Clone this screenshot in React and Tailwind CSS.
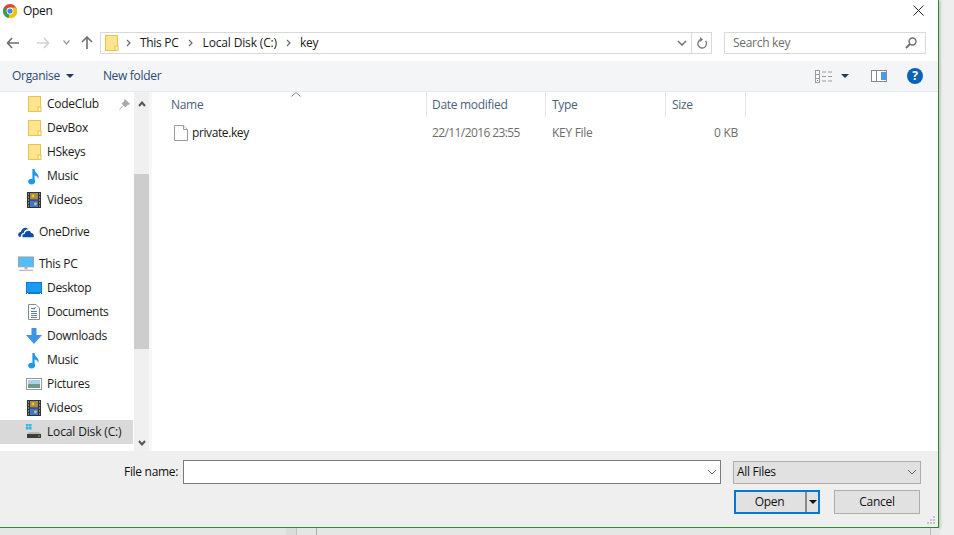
const font = { fontFamily: '"Open Sans","Noto Sans",sans-serif' };

function Folder() {
  return (
    <svg className="block" width="14" height="16" viewBox="0 0 14 16">
      <rect x="0.5" y="0.5" width="12" height="15" fill="#fde58f" stroke="#e8c350" />
      <rect x="10" y="11" width="3" height="4.5" fill="#fff3c4" stroke="#e8c350" />
    </svg>
  );
}
function Note() {
  return (
    <svg className="block" width="13" height="17" viewBox="0 0 13 17">
      <path d="M5.5 1 V13" stroke="#1c97ea" strokeWidth="2.2" fill="none" />
      <ellipse cx="3.6" cy="13.6" rx="3.4" ry="2.8" fill="#1c97ea" />
      <path d="M5.5 0.5 C6.5 4.5 11.5 5.5 10.5 11 C10 8.5 7.5 7.5 5.5 7 Z" fill="#1c97ea" />
    </svg>
  );
}
function Film() {
  return (
    <svg className="block" width="14" height="16" viewBox="0 0 14 16">
      <rect width="14" height="16" fill="#333" />
      <rect x="3" y="1" width="8" height="6.5" fill="#a58b4c" />
      <rect x="3" y="8.5" width="8" height="6.5" fill="#3f74d8" />
      <circle cx="6" cy="4" r="1.4" fill="#e6c93a" />
      <circle cx="8.5" cy="12" r="1.4" fill="#e6c93a" />
      <path d="M1 2h1M1 5h1M1 8h1M1 11h1M1 14h1M12 2h1M12 5h1M12 8h1M12 11h1M12 14h1" stroke="#ddd" />
    </svg>
  );
}
function Cloud() {
  return (
    <svg className="block" width="17" height="12" viewBox="0 0 17 12">
      <path d="M1 11 C-1 8 1 6 3 6 C4 2 8 0 11 3 C8 3 6 5 6 7 C4 7 3 9 3 11 Z" fill="#0f4fa8" />
      <path d="M5 11.5 C4 9 5.5 8 7 8 C8 4 13 3.5 14 7 C16 7 17.5 9 16.5 11.5 Z" fill="#0f4fa8" />
    </svg>
  );
}
function Pc() {
  return (
    <svg className="block" width="17" height="16" viewBox="0 0 17 16">
      <rect x="0.5" y="0.5" width="16" height="10.5" fill="#53bdf5" stroke="#9aa3ab" />
      <rect x="7" y="11" width="3" height="2.5" fill="#a9b0b6" />
      <rect x="1" y="14" width="15" height="1.5" fill="#b8bec4" />
    </svg>
  );
}
function Desktop() {
  return (
    <svg className="block" width="16" height="12" viewBox="0 0 16 12">
      <rect width="16" height="12" fill="#0c7bd8" />
      <rect x="1" y="1" width="14" height="9" fill="#1b9bf0" />
      <path d="M1 11.5h1M14 11.5h1" stroke="#fff" />
    </svg>
  );
}
function Doc() {
  return (
    <svg className="block" width="12" height="16" viewBox="0 0 12 16">
      <path d="M0.5 0.5 H8 L11.5 4 V15.5 H0.5 Z" fill="#fff" stroke="#8b8b8b" />
      <path d="M3 4.5h3M3 7.5h6M3 9.5h6M3 11.5h6M3 13.5h6" stroke="#5b7fa0" />
      <path d="M6 5.5l1.5-2.5" stroke="#2b8ad8" />
    </svg>
  );
}
function Down() {
  return (
    <svg className="block" width="16" height="16" viewBox="0 0 16 16">
      <path d="M5.5 0 H10.5 V7 H16 L8 16 L0 7 H5.5 Z" fill="#3f94e6" />
    </svg>
  );
}
function Pic() {
  return (
    <svg className="block" width="16" height="12" viewBox="0 0 16 12">
      <rect x="0.5" y="0.5" width="15" height="11" fill="#fff" stroke="#9a9a9a" />
      <rect x="2" y="2" width="12" height="4" fill="#a9d2ea" />
      <rect x="2" y="6" width="12" height="4" fill="#6e9a8a" />
    </svg>
  );
}
function Disk() {
  return (
    <svg className="block" width="16" height="16" viewBox="0 0 16 16">
      <rect x="0" y="0" width="2.5" height="2.5" fill="#2fb3ec" />
      <rect x="3" y="0" width="2.5" height="2.5" fill="#2fb3ec" />
      <rect x="0" y="3" width="2.5" height="2.5" fill="#2fb3ec" />
      <rect x="3" y="3" width="2.5" height="2.5" fill="#2fb3ec" />
      <path d="M3 8 H13 L15 10 H1 Z" fill="#b9b9b9" />
      <rect x="1" y="10" width="14" height="4" fill="#3c3c3c" />
      <rect x="12" y="11.5" width="2" height="1" fill="#4fd04f" />
    </svg>
  );
}
function Chrome() {
  return (
    <svg className="block" width="14" height="14" viewBox="0 0 14 14">
      <circle cx="7" cy="7" r="7" fill="#db4437" />
      <path d="M7 7 L1 3.6 A7 7 0 0 0 5.6 13.9 Z" fill="#2da44e" />
      <path d="M7 3.6 H13.4 A7 7 0 0 1 5.6 13.9 L7 7 Z" fill="#f4c20d" />
      <circle cx="7" cy="7" r="3.4" fill="#fff" />
      <circle cx="7" cy="7" r="2.6" fill="#4285f4" />
    </svg>
  );
}
function Chevron({ color = "#6d6d6d", width = 1.3 }) {
  return (
    <svg className="block" width="10" height="6" viewBox="0 0 10 6">
      <path d="M1 1 L5 5 L9 1" fill="none" stroke={color} strokeWidth={width} />
    </svg>
  );
}
function Sep() {
  return (
    <svg className="block" width="5" height="8" viewBox="0 0 5 8">
      <path d="M1 1 L4 4 L1 7" fill="none" stroke="#6a6a6a" strokeWidth="1.2" />
    </svg>
  );
}
function Caret({ color = "#1f3a5f" }) {
  return (
    <svg className="block" width="8" height="4" viewBox="0 0 8 4">
      <path d="M0 0 H8 L4 4 Z" fill={color} />
    </svg>
  );
}

function NavRow({ icon, label, indent = true, selected, pin, mb, inset }) {
  return (
    <div className={`flex items-center h-6 ${indent ? "pl-[26px]" : "pl-[18px]"} ${selected ? "bg-[#d9d9d9] tracking-[-0.15px]" : ""} ${mb ? "mb-2" : ""}`}>
      <div className="w-[21px] shrink-0 flex items-center">
        <div className={`${inset ? "pl-[2px]" : "w-4 flex justify-center"}`}>{icon}</div>
      </div>
      <span className="text-[12px] text-[#1a1a1a] whitespace-nowrap">{label}</span>
      {pin && (
        <svg className="ml-auto mr-[3px]" width="11" height="11" viewBox="0 0 11 11">
          <path d="M6 0.5 L10.5 5 L8.5 5.5 L6.5 8 L3 4.5 L5.5 2.5 Z M4 6.5 L0.5 10.5" fill="#a8a8a8" stroke="#a8a8a8" />
        </svg>
      )}
    </div>
  );
}

function ColHead({ w, label, pad = "pl-[6px]" }) {
  return (
    <div className={`${w} h-[25px] shrink-0 border-r border-[#e5e5e5] ${pad} flex items-center text-[12px] text-[#4c607a]`}>
      {label}
    </div>
  );
}

export default function App() {
  return (
    <div className="w-[954px] h-[535px] bg-[#eeeeee] overflow-hidden tracking-[-0.3px]" style={font}>
      <div className="w-[939px] h-[528px] bg-white border-r border-b border-[#2f8a2f] flex flex-col shadow-[1px_1px_3px_rgba(0,0,0,0.25)]">
        {/* title */}
        <div className="h-[21px] shrink-0 flex items-center pl-[3px] pr-[14px]">
          <Chrome />
          <span className="ml-[6px] text-[12px] text-[#111]">Open</span>
          <svg className="ml-auto" width="11" height="11" viewBox="0 0 11 11">
            <path d="M0.5 0.5 L10.5 10.5 M10.5 0.5 L0.5 10.5" stroke="#222" strokeWidth="1" />
          </svg>
        </div>
        {/* nav */}
        <div className="h-[40px] shrink-0 flex items-center pt-[3px]">
          <svg className="ml-[6px]" width="13" height="12" viewBox="0 0 13 12">
            <path d="M6 1 L1.5 6 L6 11 M1.5 6 H13" fill="none" stroke="#6f6f6f" strokeWidth="1.6" />
          </svg>
          <svg className="ml-[18px]" width="13" height="12" viewBox="0 0 13 12">
            <path d="M7 1 L11.5 6 L7 11 M11.5 6 H0" fill="none" stroke="#cfcfcf" strokeWidth="1.6" />
          </svg>
          <div className="ml-[13px]"><svg className="block" width="7" height="5" viewBox="0 0 7 5"><path d="M0.5 0.5 L3.5 4 L6.5 0.5" fill="none" stroke="#9a9a9a" strokeWidth="1.3" /></svg></div>
          <svg className="ml-[11px]" width="12" height="13" viewBox="0 0 12 13">
            <path d="M1 6 L6 1 L11 6 M6 1 V13" fill="none" stroke="#6f6f6f" strokeWidth="1.6" />
          </svg>
          <div className="ml-[7px] w-[612px] h-[22px] border border-[#d9d9d9] flex items-center pl-[4px]">
            <Folder />
            <span className="ml-[7px]"><Sep /></span>
            <span className="ml-[9px] text-[12px] text-[#1a1a1a]">This PC</span>
            <span className="ml-[9px]"><Sep /></span>
            <span className="ml-[10px] text-[12px] text-[#1a1a1a] tracking-[-0.15px]">Local Disk (C:)</span>
            <span className="ml-[9px]"><Sep /></span>
            <span className="ml-[9px] text-[12px] text-[#1a1a1a]">key</span>
            <div className="ml-auto flex items-center h-full">
              <span className="mr-[4px] flex"><Chevron color="#777" width={1.6} /></span>
              <div className="w-[20px] h-full border-l border-[#d9d9d9] flex items-center justify-center">
                <svg width="11" height="12" viewBox="0 0 11 12">
                  <path d="M9.5 4 A4.3 4.3 0 1 1 5.5 2.5" fill="none" stroke="#7b7b7b" strokeWidth="1.4" />
                  <path d="M4 0 L7 2.5 L4 5 Z" fill="#7b7b7b" />
                </svg>
              </div>
            </div>
          </div>
          <div className="ml-[12px] w-[202px] h-[22px] border border-[#d9d9d9] flex items-center pl-[8px] pr-[8px]">
            <span className="text-[12px] text-[#6d6d6d]">Search key</span>
            <svg className="ml-auto" width="12" height="12" viewBox="0 0 12 12">
              <circle cx="7.5" cy="4.5" r="3.5" fill="none" stroke="#6f6f6f" strokeWidth="1.4" />
              <path d="M5 7 L1 11" stroke="#6f6f6f" strokeWidth="2" />
            </svg>
          </div>
        </div>
        {/* toolbar */}
        <div className="h-[31px] shrink-0 bg-[#f4f5f7] border-b border-[#e8e9eb] flex items-center pl-[12px]">
          <span className="text-[12px] text-[#2b4a75]">Organise</span>
          <span className="ml-[6px] flex"><Caret /></span>
          <span className="ml-[29px] text-[12px] text-[#2b4a75]">New folder</span>
          <svg className="ml-auto" width="17" height="13" viewBox="0 0 17 13">
            <rect x="0.5" y="0.5" width="4" height="12" fill="#fff" stroke="#9a9a9a" />
            <path d="M0.5 4.5h4M0.5 8.5h4" stroke="#9a9a9a" />
            <rect x="2" y="10" width="1" height="1" fill="#d33" />
            <path d="M7 2h4M13 2h4M7 6.5h4M13 6.5h4M7 11h4M13 11h4" stroke="#9a9a9a" />
          </svg>
          <span className="ml-[9px] flex"><Caret /></span>
          <svg className="ml-[22px]" width="16" height="12" viewBox="0 0 16 12">
            <rect x="0.5" y="0.5" width="15" height="11" fill="#fff" stroke="#8a8a8a" />
            <rect x="5" y="1" width="1" height="10" fill="#8a8a8a" />
            <rect x="10" y="2" width="5" height="8" fill="#4a9be6" />
          </svg>
          <div className="ml-[20px] mr-[15px] w-4 h-4 rounded-full bg-[#0a63b8] flex items-center justify-center text-[12px] font-bold text-white leading-none">?</div>
        </div>
        {/* main */}
        <div className="flex-1 min-h-0 flex">
          <div className="w-[133px] shrink-0 overflow-hidden">
            <NavRow icon={<Folder />} inset label="CodeClub" pin />
            <NavRow icon={<Folder />} inset label="DevBox" />
            <NavRow icon={<Folder />} inset label="HSkeys" />
            <NavRow icon={<Note />} inset label="Music" />
            <NavRow icon={<Film />} label="Videos" mb />
            <NavRow icon={<Cloud />} label="OneDrive" indent={false} mb />
            <NavRow icon={<Pc />} label="This PC" indent={false} />
            <NavRow icon={<Desktop />} label="Desktop" />
            <NavRow icon={<Doc />} inset label="Documents" />
            <NavRow icon={<Down />} label="Downloads" />
            <NavRow icon={<Note />} inset label="Music" />
            <NavRow icon={<Pic />} label="Pictures" />
            <NavRow icon={<Film />} label="Videos" />
            <NavRow icon={<Disk />} label="Local Disk (C:)" selected />
          </div>
          <div className="ml-px w-[15px] shrink-0 bg-[#f0f0f0] flex flex-col">
            <div className="h-[82px] flex justify-center pt-[9px]">
              <svg width="8" height="6" viewBox="0 0 8 6"><path d="M1 5 L4 1.5 L7 5" fill="none" stroke="#555" strokeWidth="2" /></svg>
            </div>
            <div className="h-[175px] bg-[#cdcdcd]" />
            <div className="flex-1 flex justify-center items-end pb-[5px]">
              <svg width="8" height="6" viewBox="0 0 8 6"><path d="M1 1 L4 4.5 L7 1" fill="none" stroke="#555" strokeWidth="2" /></svg>
            </div>
          </div>
          <div className="w-[3px] shrink-0 bg-[#f8f8f8]" />
          <div className="flex-1 min-w-0 relative pl-[18px]">
            <svg className="absolute left-[139px] top-[0px]" width="10" height="5" viewBox="0 0 10 5">
              <path d="M0.5 4.5 L5 0.5 L9.5 4.5" fill="none" stroke="#8c8c8c" />
            </svg>
            <div className="flex">
              <ColHead w="w-[257px]" label="Name" pad="pl-[1px]" />
              <ColHead w="w-[119px]" label="Date modified" pad="pl-[5px]" />
              <ColHead w="w-[120px]" label="Type" />
              <ColHead w="w-[80px]" label="Size" />
            </div>
            <div className="flex items-center h-[24px] mt-[4px] text-[12px] text-[#6d6d6d]">
              <div className="w-[256px] flex items-center pl-[4px]">
                <svg className="block" width="14" height="16" viewBox="0 0 14 16">
                  <path d="M0.5 0.5 H9.5 L13.5 4.5 V15.5 H0.5 Z" fill="#fff" stroke="#9a9a9a" />
                  <path d="M9.5 0.5 V4.5 H13.5" fill="#f0f0f0" stroke="#9a9a9a" />
                </svg>
                <span className="ml-[4px] text-[#1a1a1a] tracking-[-0.4px]">private.key</span>
              </div>
              <div className="w-[120px] pl-[6px] tracking-[-0.6px]">22/11/2016 23:55</div>
              <div className="w-[120px] pl-[6px]">KEY File</div>
              <div className="w-[72px] text-right">0 KB</div>
            </div>
          </div>
        </div>
        {/* footer */}
        <div className="h-[76px] shrink-0 bg-[#efefef] relative pl-[124px] pr-[17px] pt-[9px]">
          <div className="flex items-center h-[24px]">
            <span className="w-[59px] shrink-0 text-[12px] text-[#111]">File name:</span>
            <div className="w-[538px] h-full bg-white border border-[#7a7a7a] flex items-center justify-end pr-[3px]">
              <Chevron color="#666" width={1} />
            </div>
            <div className="ml-[12px] w-[188px] h-[23px] bg-[#e1e1e1] border border-[#adadad] flex items-center pl-[3px] pr-[3px]">
              <span className="text-[12px] text-[#111]">All Files</span>
              <span className="ml-auto flex"><Chevron color="#666" width={1} /></span>
            </div>
          </div>
          <div className="flex justify-end mt-[6px] pr-px">
            <div className="w-[86px] h-[24px] bg-[#e1e1e1] border-2 border-[#0078d7] flex items-center">
              <span className="flex-1 text-center text-[12px] text-[#111] pr-[2px]">Open</span>
              <div className="w-[2px] h-full bg-[#8a8a8a]" />
              <span className="w-[11px] flex justify-center"><Caret color="#111" /></span>
            </div>
            <div className="ml-[14px] w-[86px] h-[24px] bg-[#e1e1e1] border border-[#adadad] flex items-center justify-center text-[12px] text-[#111]">
              Cancel
            </div>
          </div>
          <svg className="absolute right-[2px] bottom-[2px]" width="9" height="9" viewBox="0 0 9 9">
            <path d="M6 0h2v2H6zM3 3h2v2H3zM6 3h2v2H6zM0 6h2v2H0zM3 6h2v2H3zM6 6h2v2H6z" fill="#c4c4c4" />
          </svg>
        </div>
      </div>
      {/* page behind the dialog, visible under its bottom edge */}
      <div className="h-[7px] w-[939px] flex bg-[#e6e6e6]">
        <div className="ml-[286px] w-[10px] bg-[#dcdcdc]" />
        <div className="w-px bg-[#c4c4c4]" />
        <div className="ml-[19px] w-px bg-[#b0b0b0]" />
        <div className="ml-[613px] w-px bg-[#b8b8b8]" />
      </div>
    </div>
  );
}
